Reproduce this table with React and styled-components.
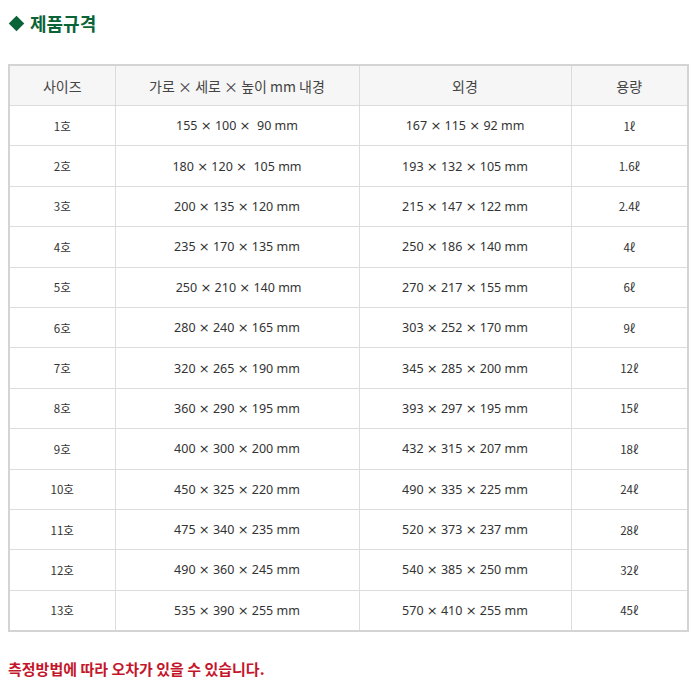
import React from "react";
import styled, { createGlobalStyle } from "styled-components";

const GlobalStyle = createGlobalStyle`
  body {
    margin: 0;
    background: #fff;
    font-family: "Noto Sans CJK KR", "Noto Sans", sans-serif;
    color: #333;
  }
`;

const Page = styled.div`
  padding: 9px 12px 0 8px;
  width: 700px;
  box-sizing: border-box;
`;

const Title = styled.h2`
  display: flex;
  align-items: center;
  gap: 8px;
  margin: 0 0 27px 0;
  height: 28px;
  font-size: 18px;
  font-weight: 700;
  color: #0b6438;
`;

const Diamond = styled.span`
  display: inline-block;
  width: 11px;
  height: 11px;
  background: #0b6438;
  transform: rotate(45deg);
  margin-left: 3px;
`;

const Table = styled.table`
  width: 679px;
  border-collapse: collapse;
  border: 2px solid #d4d4d4;
  table-layout: fixed;
`;

const Th = styled.th`
  height: 39px;
  padding: 0;
  background: #f6f6f6;
  border: 1px solid #dcdcdc;
  font-weight: 400;
  font-size: 14px;
  color: #444;
  text-align: center;
`;

const Td = styled.td`
  height: 39.4px;
  padding: 0;
  border: 1px solid #dcdcdc;
  font-size: ${p => (p.small ? "11.5px" : "12.5px")};
  color: #333;
  text-align: center;
  white-space: pre;
  font-family: ${p =>
    p.small ? '"Noto Sans CJK KR", sans-serif' : '"Noto Sans", "Noto Sans CJK KR", sans-serif'};
`;

const Times = styled.span`
  font-family: "DejaVu Sans", sans-serif;
  font-size: 13px;
`;

const Notice = styled.p`
  margin: 26px 0 0 0;
  font-size: 15px;
  font-weight: 700;
  color: #c4162a;
`;

const rows = [
  ["1호", "155 × 100 ×  90 mm", "167 × 115 × 92 mm", "1ℓ"],
  ["2호", "180 × 120 ×  105 mm", "193 × 132 × 105 mm", "1.6ℓ"],
  ["3호", "200 × 135 × 120 mm", "215 × 147 × 122 mm", "2.4ℓ"],
  ["4호", "235 × 170 × 135 mm", "250 × 186 × 140 mm", "4ℓ"],
  ["5호", " 250 × 210 × 140 mm", "270 × 217 × 155 mm", "6ℓ"],
  ["6호", "280 × 240 × 165 mm", "303 × 252 × 170 mm", "9ℓ"],
  ["7호", "320 × 265 × 190 mm", "345 × 285 × 200 mm", "12ℓ"],
  ["8호", "360 × 290 × 195 mm", "393 × 297 × 195 mm", "15ℓ"],
  ["9호", "400 × 300 × 200 mm", "432 × 315 × 207 mm", "18ℓ"],
  ["10호", "450 × 325 × 220 mm", "490 × 335 × 225 mm", "24ℓ"],
  ["11호", "475 × 340 × 235 mm", "520 × 373 × 237 mm", "28ℓ"],
  ["12호", "490 × 360 × 245 mm", "540 × 385 × 250 mm", "32ℓ"],
  ["13호", "535 × 390 × 255 mm", "570 × 410 × 255 mm", "45ℓ"],
];

const Dims = ({ text }) =>
  text.split("×").map((part, i) => (
    <React.Fragment key={i}>
      {i > 0 && <Times>×</Times>}
      {part}
    </React.Fragment>
  ));

export default function App() {
  return (
    <>
      <GlobalStyle />
      <Page>
        <Title>
          <Diamond />
          제품규격
        </Title>
        <Table>
          <colgroup>
            <col style={{ width: 106 }} />
            <col style={{ width: 244 }} />
            <col style={{ width: 212 }} />
            <col style={{ width: 117 }} />
          </colgroup>
          <thead>
            <tr>
              <Th>사이즈</Th>
              <Th>가로 × 세로 × 높이 mm 내경</Th>
              <Th>외경</Th>
              <Th>용량</Th>
            </tr>
          </thead>
          <tbody>
            {rows.map(r => (
              <tr key={r[0]}>
                <Td small>{r[0]}</Td>
                <Td>
                  <Dims text={r[1]} />
                </Td>
                <Td>
                  <Dims text={r[2]} />
                </Td>
                <Td small>{r[3]}</Td>
              </tr>
            ))}
          </tbody>
        </Table>
        <Notice>측정방법에 따라 오차가 있을 수 있습니다.</Notice>
      </Page>
    </>
  );
}
